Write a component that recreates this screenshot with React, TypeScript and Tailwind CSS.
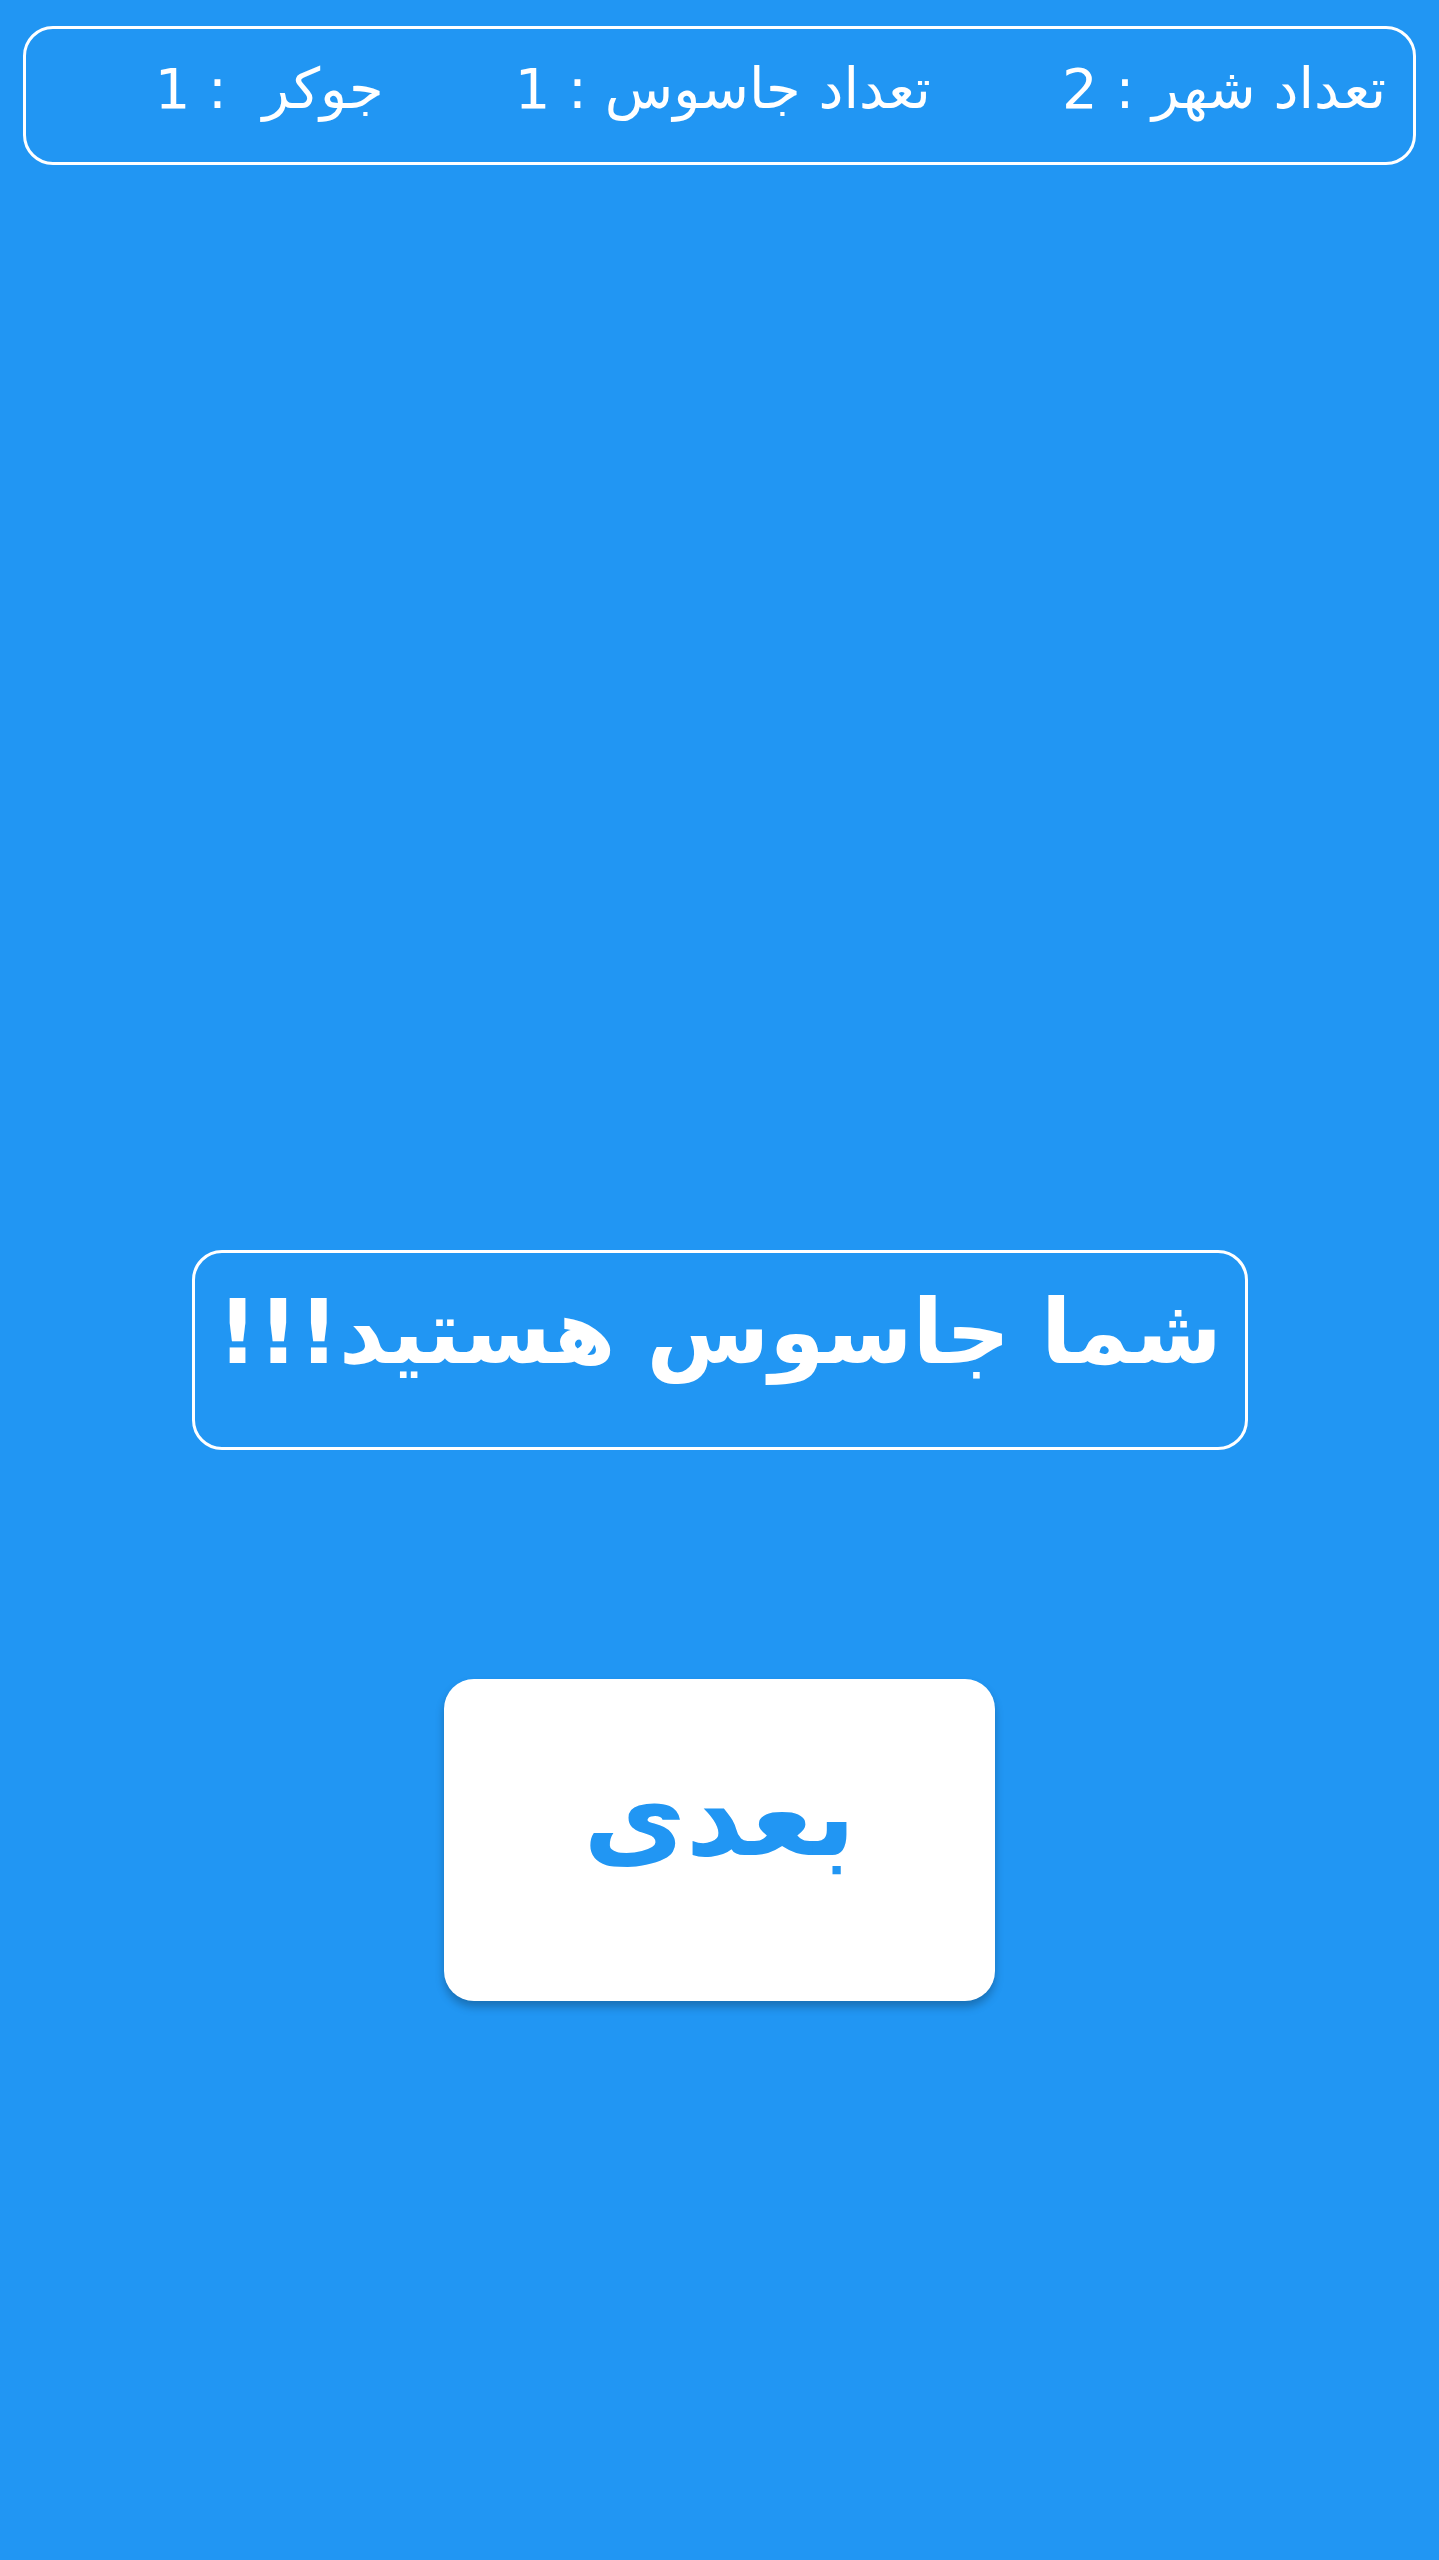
import React from 'react';

const font = { fontFamily: '"DejaVu Sans", "Noto Sans", sans-serif' };

export default function App() {
  const counts = [
    { label: 'تعداد شهر', value: 2 },
    { label: 'تعداد جاسوس', value: 1 },
    { label: 'جوکر ', value: 1 },
  ];

  return (
    <div dir="rtl" style={font} className="flex flex-col items-center min-h-[2560px] w-full bg-[#2196F3] text-white">
      {/* role counts */}
      <div className="mt-[26px] flex h-[139px] w-[1393px] items-center gap-[131px] rounded-[30px] border-[3px] border-white pr-[27px] pb-[14px]">
        {counts.map((c) => (
          <span key={c.label} className="whitespace-pre text-[56px] leading-none">
            {c.label} : {c.value}
          </span>
        ))}
      </div>

      <div className="mt-[1085px] flex h-[200px] w-[1056px] items-center justify-center rounded-[30px] border-[3px] border-white pb-[36px]">
        <span className="whitespace-nowrap text-[89px] font-bold leading-none">شما جاسوس هستید!!!</span>
      </div>

      <button className="mt-[229px] flex h-[322px] w-[551px] items-center justify-center rounded-[30px] bg-white pb-[48px] shadow-[0_6px_8px_rgba(0,0,0,0.25)]">
        <span className="text-[112px] font-bold leading-none text-[#2196F3]">بعدی</span>
      </button>
    </div>
  );
}
